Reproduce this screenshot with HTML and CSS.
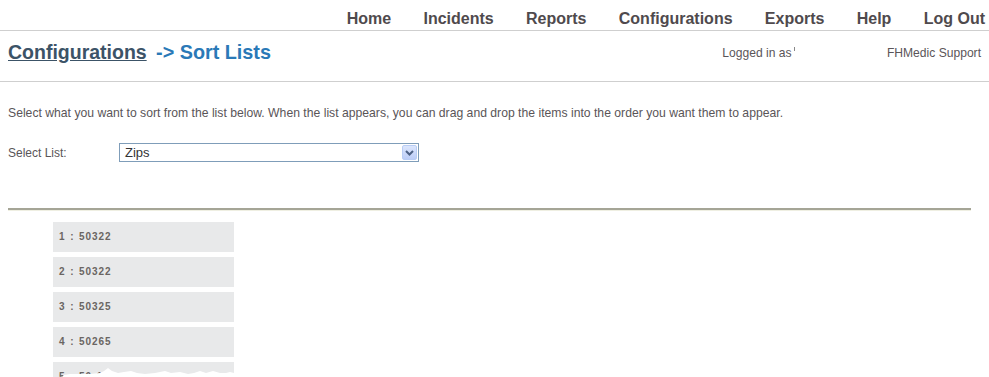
FILE: index.html
```html
<!DOCTYPE html>
<html lang="en">
<head>
  <meta charset="UTF-8" />
  <title>Configurations - Sort Lists</title>
  <link rel="stylesheet" href="styles.css">
</head>
<body>

  <nav class="topnav">
    <a href="#">Home</a>
    <a href="#">Incidents</a>
    <a href="#">Reports</a>
    <a href="#">Configurations</a>
    <a href="#">Exports</a>
    <a href="#">Help</a>
    <a href="#">Log Out</a>
  </nav>

  <div class="titlebar">
    <h1><a href="#">Configurations</a> <span class="crumb">-&gt; Sort Lists</span></h1>
    <div class="userinfo">
      <span class="logged">Logged in as <span class="tick"></span></span>
      <span class="username">FHMedic Support</span>
    </div>
  </div>

  <main class="content">
    <p class="intro">Select what you want to sort from the list below. When the list appears, you can drag and drop the items into the order you want them to appear.</p>

    <div class="field">
      <label>Select List:</label>
      <div class="select">
        <span>Zips</span>
        <span class="arrow">
          <svg width="9" height="6" viewBox="0 0 9 6"><path d="M1 1 L4.5 4.5 L8 1" fill="none" stroke="#4d6185" stroke-width="2"/></svg>
        </span>
      </div>
    </div>

    <hr class="divider">

    <ul class="sortlist">
      <li>1 : 50322</li>
      <li>2 : 50322</li>
      <li>3 : 50325</li>
      <li>4 : 50265</li>
      <li>5 : 50 1</li>
    </ul>
  </main>

  <!-- torn bottom edge of the capture -->
  <svg class="torn" width="989" height="10" viewBox="0 0 989 10">
    <polygon fill="#fff" points="62,10 64,8 70,7 80,7 90,7 100,6 104,4 108,1 112,4 118,6 124,5 131,4 137,6 145,7 155,6 165,4 171,6 180,5 188,7 194,6 200,4 206,6 213,4 220,6 226,6 230,5 234,6 234,10"/>
  </svg>

</body>
</html>
```

FILE: styles.css
```css
html {
  overflow: hidden;
}

body {
  font-family: "Liberation Sans", Arial, sans-serif;
  margin: 0;
  padding: 0;
  background: #fff;
  color: #5a5558;
  font-size: 12px;
  position: relative;
  height: 377px;
}

.topnav {
  display: flex;
  justify-content: flex-end;
  align-items: center;
  gap: 32.3px;
  height: 31px;
  padding: 0 4px 0 0;
  border-bottom: 1px solid #cfcfcf;
  box-sizing: border-box;
}

.topnav a {
  color: #4f4a4d;
  font-size: 16px;
  font-weight: bold;
  text-decoration: none;
  padding-top: 7px;
}

.titlebar {
  display: flex;
  justify-content: space-between;
  align-items: center;
  height: 51px;
  padding: 0 8px;
  border-bottom: 1px solid #cfcfcf;
  box-sizing: border-box;
}

.titlebar h1 {
  margin: 0;
  font-size: 19.5px;
  font-weight: bold;
  color: #2a79b7;
  padding-bottom: 8px;
}

.titlebar h1 a {
  color: #3c5367;
  text-decoration: underline;
}

.crumb {
  margin-left: 4px;
  font-size: 19.8px;
}

.userinfo {
  display: flex;
  gap: 92px;
  color: #5a5558;
  font-size: 12.1px;
  padding-bottom: 6px;
}

.tick {
  display: inline-block;
  width: 1px;
  height: 4px;
  background: #888;
  vertical-align: 6px;
  margin-left: -1px;
}

.content {
  padding: 0 8px;
}

.intro {
  margin: 24px 0 0;
  line-height: 14px;
  font-size: 12.2px;
}

.field {
  display: flex;
  align-items: center;
  margin-top: 23px;
}

.field label {
  width: 111px;
}

.select {
  width: 300px;
  height: 19px;
  border: 1px solid #7f9db9;
  box-sizing: border-box;
  display: flex;
  align-items: center;
  justify-content: space-between;
  padding: 0 1px 0 5px;
  font-size: 13px;
  color: #333;
}

.arrow {
  width: 15px;
  height: 15px;
  box-sizing: border-box;
  border: 1px solid #b9cdf5;
  border-radius: 2px;
  background: linear-gradient(#dce6fd, #bccdf7);
  display: flex;
  align-items: center;
  justify-content: center;
}

.divider {
  margin: 46px 10px 0 0;
  border: 0;
  border-top: 2px solid #a5a596;
  border-bottom: 1px solid #efefe2;
  height: 0;
}

.sortlist {
  list-style: none;
  margin: 11px 0 0 45px;
  padding: 0;
}

.sortlist li {
  width: 181px;
  height: 30px;
  line-height: 30px;
  margin-bottom: 5px;
  background: #e8e9ea;
  padding-left: 6px;
  box-sizing: border-box;
  font-size: 10px;
  font-weight: bold;
  letter-spacing: 0.9px;
  word-spacing: 1px;
  color: #6a6562;
}

.torn {
  position: absolute;
  left: 0;
  bottom: 0;
}
```
